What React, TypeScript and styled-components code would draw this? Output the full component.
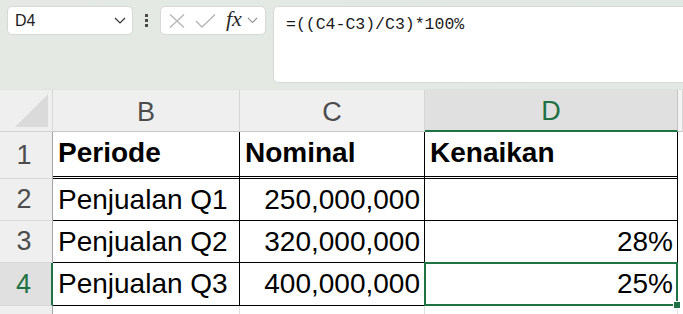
import styled, { createGlobalStyle } from "styled-components";

type Row = {
  label: string;
  nominal: string;
  kenaikan: string;
};

const ROWS: Row[] = [
  { label: "Penjualan Q1", nominal: "250,000,000", kenaikan: "" },
  { label: "Penjualan Q2", nominal: "320,000,000", kenaikan: "28%" },
  { label: "Penjualan Q3", nominal: "400,000,000", kenaikan: "25%" },
];

const GREEN = "#1f7244";

const GlobalStyle = createGlobalStyle`
  html, body {
    margin: 0;
    padding: 0;
    background: #fff;
    overflow: hidden;
  }
  body {
    font-family: "Liberation Sans", Arial, sans-serif;
  }
`;

const Chevron = ({ color = "#333", w = 12 }: { color?: string; w?: number }) => (
  <svg width={w} height={w / 2 + 1} viewBox="0 0 12 7">
    <path d="M1 1l5 5 5-5" fill="none" stroke={color} strokeWidth="1.2" />
  </svg>
);

const App = () => {
  return (
    <>
      <GlobalStyle />
      <Toolbar>
        <NameBox>
          <span>D4</span>
          <Chevron />
        </NameBox>
        <Dots>
          <i />
          <i />
          <i />
        </Dots>
        <FxGroup>
          <svg width="16" height="14" viewBox="0 0 16 14">
            <path d="M1 0.5l14 13M15 0.5l-14 13" stroke="#b4b4b4" strokeWidth="1.3" fill="none" />
          </svg>
          <svg width="21" height="14" viewBox="0 0 21 14">
            <path d="M1 7l6 6L20 0.5" stroke="#b4b4b4" strokeWidth="1.3" fill="none" />
          </svg>
          <Fx>fx</Fx>
          <Chevron color="#888" w={11} />
        </FxGroup>
        <FormulaBox>=((C4-C3)/C3)*100%</FormulaBox>
      </Toolbar>

      <Sheet>
        <Corner>
          <Triangle />
        </Corner>
        <ColHead>B</ColHead>
        <ColHead>C</ColHead>
        <ColHead active>D</ColHead>
        <ColHead edge />

        <RowHead>1</RowHead>
        <Cell bold first>Periode</Cell>
        <Cell bold first>Nominal</Cell>
        <Cell bold first>Kenaikan</Cell>
        <Blank />

        {ROWS.map((r, i) => {
          const active = i === ROWS.length - 1;
          return [
            <RowHead key={`h${i}`} active={active}>
              {i + 2}
            </RowHead>,
            <Cell key={`b${i}`}>{r.label}</Cell>,
            <Cell key={`c${i}`} right>
              {r.nominal}
            </Cell>,
            active ? (
              <Selected key={`d${i}`}>{r.kenaikan}</Selected>
            ) : (
              <Cell key={`d${i}`} right>
                {r.kenaikan}
              </Cell>
            ),
            <Blank key={`e${i}`} />,
          ];
        })}

        <RowHead />
        <Empty />
        <Empty />
        <Empty />
        <Blank />
      </Sheet>
    </>
  );
};

const Toolbar = styled.div`
  box-sizing: border-box;
  height: 90px;
  display: flex;
  align-items: flex-start;
  padding: 6px 0 0 7px;
  background: linear-gradient(90deg, #e4e9e3, #e2e8e2);
  border-bottom: 1px solid #dfe3de;
  overflow: hidden;
`;

const NameBox = styled.div`
  box-sizing: border-box;
  width: 126px;
  height: 29px;
  flex: none;
  display: flex;
  align-items: center;
  justify-content: space-between;
  padding: 0 6px 0 7px;
  background: #fff;
  border: 1px solid #d6d9d6;
  border-radius: 5px;
  font-size: 16px;
  color: #1e1e1e;
`;

const Dots = styled.div`
  width: 27px;
  height: 29px;
  flex: none;
  display: flex;
  flex-direction: column;
  align-items: center;
  justify-content: center;
  gap: 2px;
  i {
    display: block;
    width: 3px;
    height: 3px;
    background: #4a4a4a;
  }
`;

const FxGroup = styled.div`
  box-sizing: border-box;
  width: 106px;
  height: 29px;
  flex: none;
  display: flex;
  align-items: center;
  gap: 10px;
  padding: 0 4px 0 8px;
  background: #fff;
  border: 1px solid #d6d9d6;
  border-radius: 5px;
  svg:last-child {
    margin-left: -5px;
  }
`;

const Fx = styled.span`
  font-family: "Liberation Serif", "Times New Roman", serif;
  font-style: italic;
  font-size: 22px;
  color: #2a2a2a;
  line-height: 1;
  margin-top: -3px;
`;

const FormulaBox = styled.div`
  box-sizing: border-box;
  flex: none;
  width: 440px;
  height: 77px;
  margin-left: 7px;
  padding: 8px 12px;
  background: #fff;
  border: 1px solid #d6d9d6;
  border-radius: 5px;
  font-family: "Liberation Mono", "DejaVu Sans Mono", monospace;
  font-size: 16.5px;
  color: #1a1a1a;
`;

const Sheet = styled.div`
  display: grid;
  grid-template-columns: 53px 187px 185px 253px 1fr;
  grid-template-rows: 42px 47px 42px 42px 43px 9px;
  overflow: hidden;
`;

const Corner = styled.div`
  box-sizing: border-box;
  background: #efefef;
  border-right: 1px solid #d8d8d8;
  border-bottom: 1px solid #d2d2d2;
  display: flex;
  align-items: flex-end;
  justify-content: flex-end;
  padding: 0 4px 4px 0;
`;

const Triangle = styled.div`
  width: 0;
  height: 0;
  border-left: 33px solid transparent;
  border-bottom: 33px solid #dadada;
`;

const ColHead = styled.div<{ active?: boolean; edge?: boolean }>`
  box-sizing: border-box;
  display: flex;
  align-items: center;
  justify-content: center;
  padding-top: 3px;
  font-size: 27px;
  color: ${(p) => (p.active ? GREEN : "#4d4d4d")};
  background: ${(p) => (p.active ? "#e0e0e0" : p.edge ? "#f3f3f3" : "#efefef")};
  border-right: 1px solid ${(p) => (p.active ? "#c4c4c4" : "#d6d6d6")};
  border-bottom: ${(p) => (p.active ? `2px solid ${GREEN}` : "1px solid #c8c8c8")};
`;

const RowHead = styled.div<{ active?: boolean }>`
  box-sizing: border-box;
  display: flex;
  align-items: center;
  justify-content: center;
  padding-right: 4px;
  font-size: 27px;
  color: ${(p) => (p.active ? GREEN : "#4d4d4d")};
  background: ${(p) => (p.active ? "#e0e0e0" : "#efefef")};
  border-bottom: 1px solid #d8d8d8;
  border-right: ${(p) => (p.active ? `2px solid ${GREEN}` : "1px solid #a4a4a4")};
`;

const Cell = styled.div<{ bold?: boolean; right?: boolean; first?: boolean }>`
  box-sizing: border-box;
  display: flex;
  align-items: center;
  justify-content: ${(p) => (p.right ? "flex-end" : "flex-start")};
  padding: ${(p) => (p.first ? "0 5px 2px" : "0 4px 0 5px")};
  font-size: 28px;
  font-weight: ${(p) => (p.bold ? 700 : 400)};
  color: #000;
  white-space: nowrap;
  border-right: 1px solid #000;
  border-bottom: ${(p) => (p.first ? "3px double #000" : "1px solid #000")};
`;

const Selected = styled(Cell).attrs({ right: true })`
  position: relative;
  margin: -1px 0 0 -1px;
  padding-right: 3px;
  border: 2px solid ${GREEN};
  &::after {
    content: "";
    position: absolute;
    right: -5px;
    bottom: -5px;
    width: 6px;
    height: 6px;
    background: ${GREEN};
    border: 1px solid #fff;
  }
`;

const Blank = styled.div`
  background: #fff;
`;

const Empty = styled.div`
  border-right: 1px solid #e0e0e0;
`;

export default App;
